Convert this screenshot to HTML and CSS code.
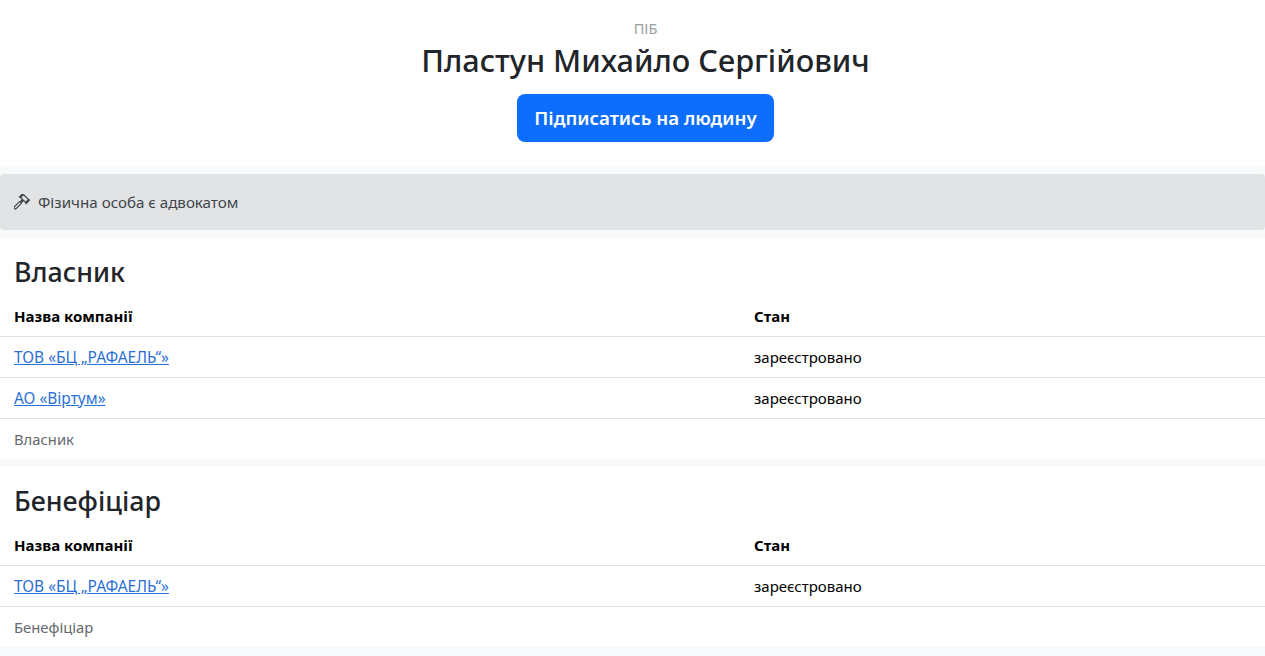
FILE: index.html
```html
<!DOCTYPE html>
<html lang="uk">
<head>
<meta charset="utf-8">
<title>Пластун Михайло Сергійович</title>
<link rel="stylesheet" href="styles.css">
</head>
<body>
<header class="hero">
  <div class="hero-label">ПІБ</div>
  <h1 class="hero-name">Пластун Михайло Сергійович</h1>
  <a class="btn-subscribe" href="#">Підписатись на людину</a>
</header>
<div class="notice">
  <svg class="notice-icon" viewBox="0 0 16 16" width="16" height="16" fill="none" stroke="currentColor" stroke-width="1.2"><g transform="rotate(45 10.5 4.5)"><rect x="7" y="2.4" width="7" height="4.2"/><path d="M6 1.4v6.2M15 1.4v6.2" stroke-width="1.6"/><rect x="9.2" y="10" width="2.6" height="8.5" rx=".9"/><path d="M10.5 6.6v3.4" stroke-width="2.6"/></g></svg>
  <span>Фізична особа є адвокатом</span>
</div>
<section class="card">
  <h2 class="card-title">Власник</h2>
  <table class="companies">
    <thead><tr><th class="col-name">Назва компанії</th><th>Стан</th></tr></thead>
    <tbody>
      <tr><td><a href="#">ТОВ «БЦ „РАФАЕЛЬ“»</a></td><td>зареєстровано</td></tr>
      <tr><td><a href="#">АО «Віртум»</a></td><td>зареєстровано</td></tr>
    </tbody>
  </table>
  <div class="card-foot">Власник</div>
</section>
<section class="card">
  <h2 class="card-title">Бенефіціар</h2>
  <table class="companies">
    <thead><tr><th class="col-name">Назва компанії</th><th>Стан</th></tr></thead>
    <tbody>
      <tr><td><a href="#">ТОВ «БЦ „РАФАЕЛЬ“»</a></td><td>зареєстровано</td></tr>
    </tbody>
  </table>
  <div class="card-foot">Бенефіціар</div>
</section>
</body>
</html>
```
FILE: styles.css
```css
* { box-sizing: border-box; }
html, body { margin: 0; }
body {
  background: #f8f9fa;
  color: #212529;
  font-family: "Noto Sans", "Open Sans", sans-serif;
  font-size: 15px;
  line-height: 24px;
  display: flex;
  flex-direction: column;
  gap: 8px;
  padding-bottom: 9px;
}
.hero {
  background: #fff;
  height: 166px;
  padding: 18px 0 0 26px;
  display: flex;
  flex-direction: column;
  align-items: center;
}
.hero-label { color: #9a9da1; font-size: 14.5px; line-height: 21px; }
.hero-name { margin: 0 0 13px; font-size: 30.7px; font-weight: 500; line-height: 42px; }
.btn-subscribe {
  display: block;
  background: #0d6efd;
  color: #fff;
  font-size: 18.7px;
  font-weight: 600;
  line-height: 27px;
  padding: 10px 17px 11px;
  border-radius: 8px;
  text-decoration: none;
}
.notice {
  background: #e2e3e5;
  color: #41464b;
  height: 56px;
  padding: 0 14px;
  border-radius: 4px;
  display: flex;
  align-items: center;
  gap: 8px;
  font-size: 15.15px;
}
.notice-icon { flex: none; }
.card { background: #fff; padding: 15px 0 0; }
.card-title { margin: 0 14px 5px; font-size: 26.8px; font-weight: 500; line-height: 38px; }
.companies { width: 100%; border-collapse: collapse; color: #000; }
.companies th { text-align: left; font-weight: 700; padding: 8px 14px; border-bottom: 1px solid #dee2e6; }
.companies td { padding: 8px 14px; border-bottom: 1px solid #dee2e6; }
.col-name { width: 740px; }
.companies a { color: #2a6fd6; font-size: 15.5px; }
.card-foot { padding: 8px 14px; color: #666a6e; height: 40px; font-size: 14.8px; }
```
